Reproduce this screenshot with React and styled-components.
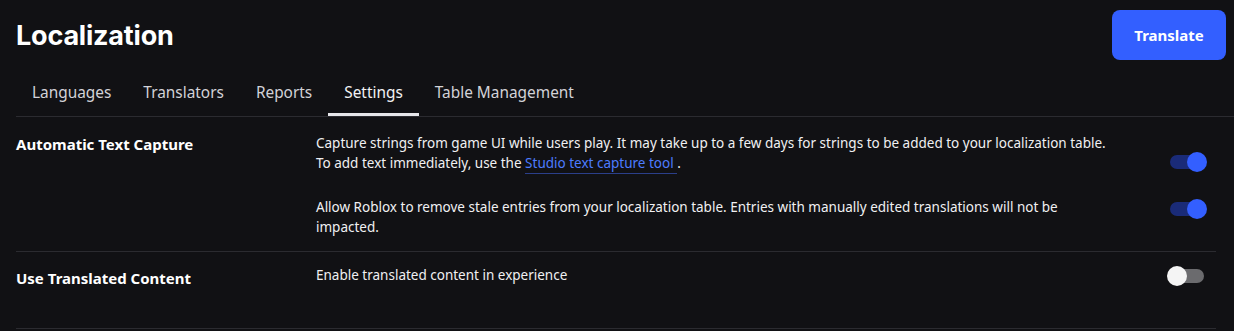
import React from 'react'
import styled, { createGlobalStyle } from 'styled-components'

const GlobalStyle = createGlobalStyle`
    body{
        margin: 0;
        background-color: #111114;
        color: #f7f7f8;
        font-family: 'Noto Sans', 'Open Sans', sans-serif;
    }
`

const Page = styled.div`
    width: 1234px;
    min-height: 331px;
    background-color: #111114;
`

const Header = styled.div`
    display: flex;
    align-items: center;
    justify-content: space-between;
    padding: 10px 8px 0 16px;
    height: 50px;
`

const Title = styled.h1`
    margin: 0;
    font-family: 'Inter', sans-serif;
    font-size: 27px;
    font-weight: 700;
    letter-spacing: -0.2px;
    color: #ffffff;
`

const TranslateButton = styled.button`
    width: 114px;
    height: 50px;
    border: none;
    border-radius: 8px;
    background-color: #335fff;
    color: #ffffff;
    font-family: 'Noto Sans', sans-serif;
    font-size: 15px;
    font-weight: 700;
    cursor: pointer;
`

const Tabs = styled.div`
    display: flex;
    margin: 8px 0 0 16px;
    height: 48px;
    border-bottom: 1px solid #2b2b30;
`

const Tab = styled.div`
    display: flex;
    align-items: center;
    padding: 0 16px;
    font-size: 15.4px;
    color: ${({ $active }) => ($active ? '#f2f2f4' : '#d3d3d8')};
    box-shadow: ${({ $active }) => ($active ? 'inset 0 -3px 0 #e6e6ea' : 'none')};
`

const Section = styled.div`
    display: grid;
    grid-template-columns: 300px 1fr 46px;
    margin: 0 18px 0 16px;
    padding: ${({ $pad }) => $pad};
    border-bottom: 1px solid #2b2b30;
`

const Label = styled.div`
    font-size: 15px;
    font-weight: 700;
    line-height: 20px;
    color: #ffffff;
    padding-top: ${({ $top }) => $top}px;
`

const Items = styled.div`
    grid-column: 2 / 4;
    display: flex;
    flex-direction: column;
    gap: 24px;
`

const Item = styled.div`
    display: flex;
    align-items: flex-start;
    justify-content: space-between;
`

const Desc = styled.p`
    margin: 0;
    max-width: 796px;
    font-size: 13.5px;
    line-height: 20px;
    color: #f0f0f2;
`

const StudioLink = styled.a`
    color: #4d7cff;
    text-decoration: none;
    border-bottom: 1px solid #2b3f8a;
    padding-bottom: 1px;
`

const ToggleTrack = styled.div`
    position: relative;
    width: 34px;
    height: 14px;
    margin: ${({ $offset }) => $offset}px 12px 0 0;
    border-radius: 7px;
    background-color: ${({ $on }) => ($on ? '#1a2b78' : '#6b6b6e')};
    flex-shrink: 0;
`

const ToggleKnob = styled.div`
    position: absolute;
    top: -3px;
    left: ${({ $on }) => ($on ? '17px' : '-3px')};
    width: 20px;
    height: 20px;
    border-radius: 50%;
    background-color: ${({ $on }) => ($on ? '#335fff' : '#f4f4f4')};
`

function Toggle({ on, offset }) {
    return (
        <ToggleTrack $on={on} $offset={offset}>
            <ToggleKnob $on={on} />
        </ToggleTrack>
    )
}

const tabs = ['Languages', 'Translators', 'Reports', 'Settings', 'Table Management']

export default function App() {
    return (
        <Page>
            <GlobalStyle />
            <Header>
                <Title>Localization</Title>
                <TranslateButton>Translate</TranslateButton>
            </Header>
            <Tabs>
                {tabs.map((t) => (
                    <Tab key={t} $active={t === 'Settings'}>{t}</Tab>
                ))}
            </Tabs>
            <Section $pad="16px 0 14px 0">
                <Label $top={1}>Automatic Text Capture</Label>
                <Items>
                    <Item>
                        <Desc>
                            Capture strings from game UI while users play. It may take up to a few days for strings to be added to your localization table.
                            <br />
                            To add text immediately, use the <StudioLink href="#">Studio text capture tool </StudioLink>.
                        </Desc>
                        <Toggle on offset={22} />
                    </Item>
                    <Item>
                        <Desc>
                            Allow Roblox to remove stale entries from your localization table. Entries with manually edited translations will not be impacted.
                        </Desc>
                        <Toggle on offset={5} />
                    </Item>
                </Items>
            </Section>
            <Section $pad="13px 0 40px 0">
                <Label $top={3}>Use Translated Content</Label>
                <Items>
                    <Item>
                        <Desc>Enable translated content in experience</Desc>
                        <Toggle offset={4} />
                    </Item>
                </Items>
            </Section>
        </Page>
    )
}
